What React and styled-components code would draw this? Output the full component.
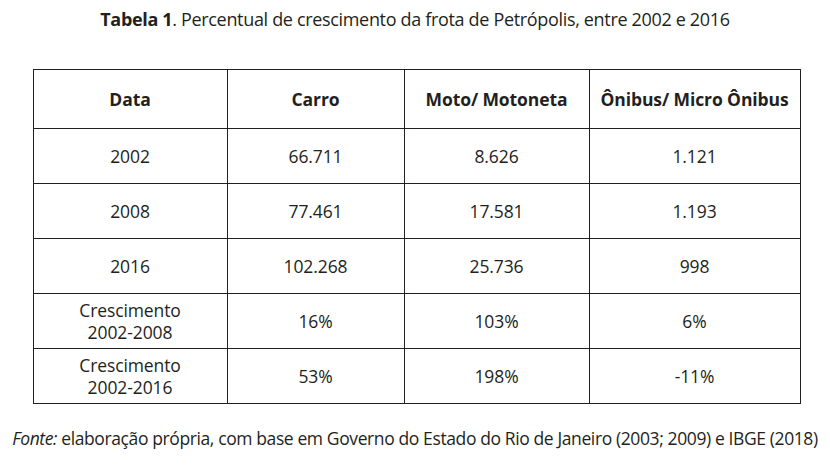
import React from "react";
import styled, { createGlobalStyle } from "styled-components";

const Global = createGlobalStyle`
  html, body { margin: 0; padding: 0; background: #fff; }
  body { font-family: "Open Sans", "Liberation Sans", sans-serif; color: #231f20; }
`;

const Page = styled.div`
  width: 830px;
  height: 466px;
  display: flex;
  flex-direction: column;
  align-items: center;
`;

const Title = styled.div`
  margin-top: 8px;
  font-size: 18px;
  line-height: 22px;
  letter-spacing: -0.33px;
  text-align: center;
  b { font-weight: 700; }
`;

const Table = styled.table`
  margin-top: 39px;
  margin-left: 3px;
  border-collapse: collapse;
  table-layout: fixed;
  width: 767px;
  font-size: 17.5px;
  letter-spacing: -0.1px;
`;

const Cell = styled.td`
  border: 1.3px solid #231f20;
  text-align: center;
  vertical-align: middle;
  padding: 0 4px;
  height: ${(p) => p.$h || 54}px;
  line-height: 22px;
  font-weight: ${(p) => (p.$head ? 700 : 400)};
`;

const Footer = styled.div`
  margin-top: 23px;
  font-size: 17.5px;
  letter-spacing: -0.39px;
  line-height: 22px;
  white-space: nowrap;
  i { font-style: italic; }
`;

const widths = [194, 177, 185, 211];
const head = ["Data", "Carro", "Moto/ Motoneta", "Ônibus/ Micro Ônibus"];
const rows = [
  ["2002", "66.711", "8.626", "1.121"],
  ["2008", "77.461", "17.581", "1.193"],
  ["2016", "102.268", "25.736", "998"],
  [<>Crescimento<br />2002-2008</>, "16%", "103%", "6%"],
  [<>Crescimento<br />2002-2016</>, "53%", "198%", "-11%"],
];

export default function App() {
  return (
    <Page>
      <Global />
      <Title>
        <b>Tabela 1</b>. Percentual de crescimento da frota de Petrópolis, entre 2002 e 2016
      </Title>
      <Table>
        <colgroup>
          {widths.map((w, i) => (
            <col key={i} style={{ width: w }} />
          ))}
        </colgroup>
        <thead>
          <tr>
            {head.map((h) => (
              <Cell as="th" key={h} $head $h={58}>
                {h}
              </Cell>
            ))}
          </tr>
        </thead>
        <tbody>
          {rows.map((r, i) => (
            <tr key={i}>
              {r.map((c, j) => (
                <Cell key={j}>{c}</Cell>
              ))}
            </tr>
          ))}
        </tbody>
      </Table>
      <Footer>
        <i>Fonte:</i> elaboração própria, com base em Governo do Estado do Rio de Janeiro (2003; 2009) e IBGE (2018)
      </Footer>
    </Page>
  );
}
